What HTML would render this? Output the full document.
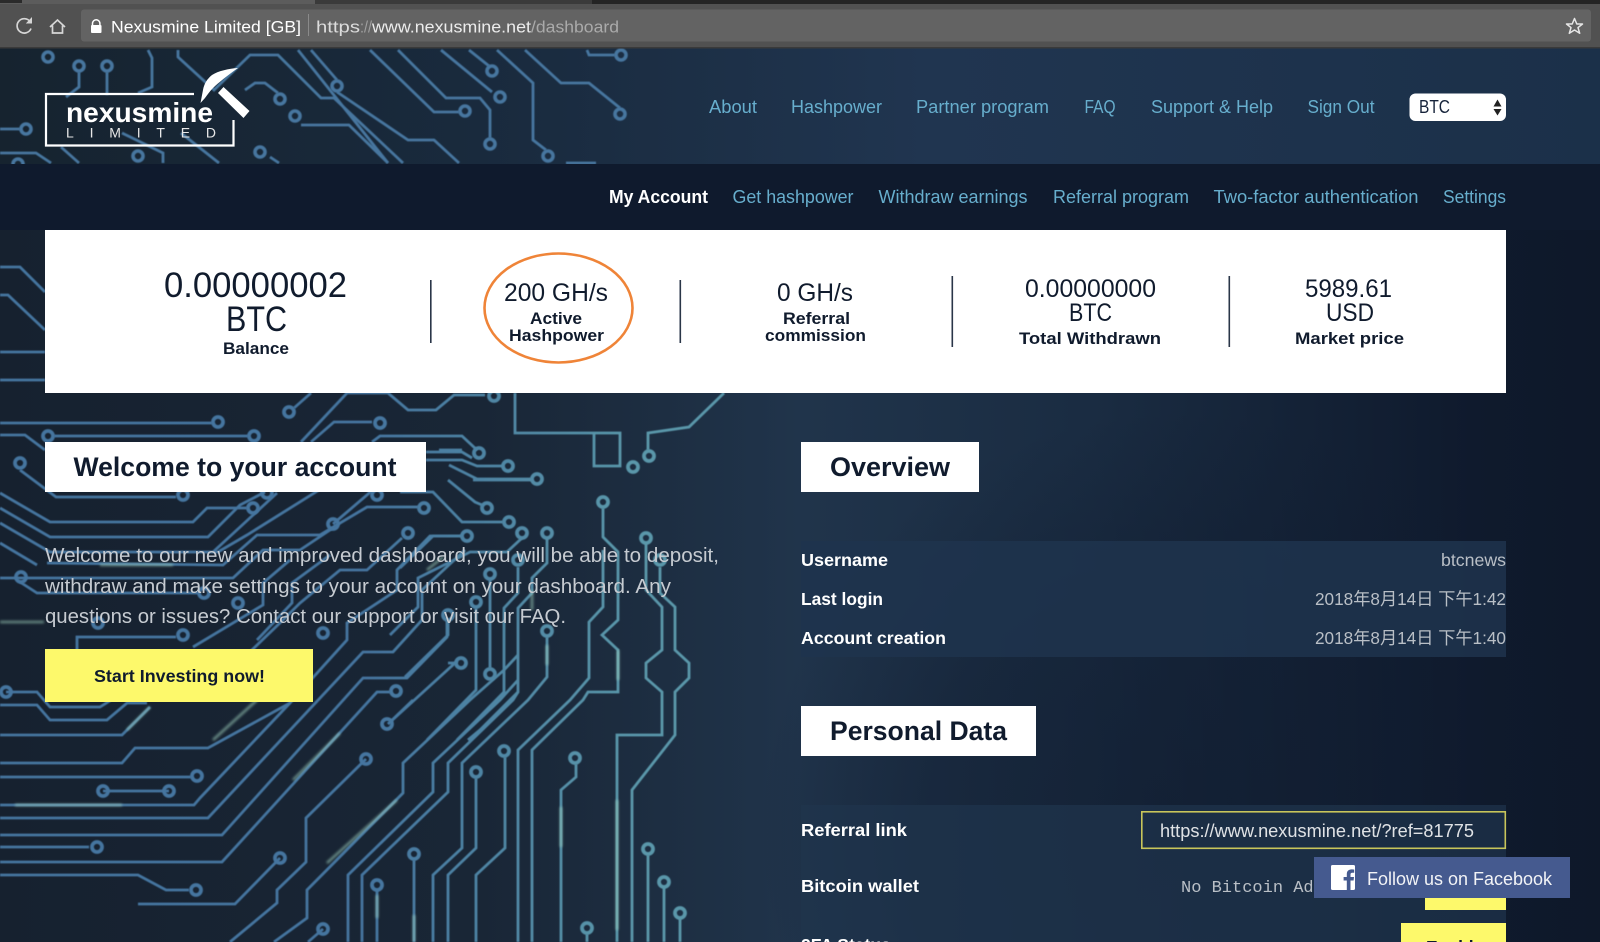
<!DOCTYPE html>
<html lang="en"><head><meta charset="utf-8"><title>Nexusmine Limited - Dashboard</title>
<style>
html,body{margin:0;padding:0;width:1600px;height:942px;overflow:hidden;background:#0f1a2d}
svg{display:block;font-family:"Liberation Sans","Noto Sans CJK SC",sans-serif}
.n{fill:#67aecd;font-size:18px}
.b{font-weight:700}
.d{fill:#101b2d}
.tr{fill:#fff;font-size:17.5px;font-weight:700}
.tv{fill:#b9bfc6;font-size:17.5px}
</style></head><body>
<svg width="1600" height="942" viewBox="0 0 1600 942" xmlns="http://www.w3.org/2000/svg">
<defs>
<linearGradient id="bg" x1="0" x2="1" y1="0" y2="0"><stop offset="0" stop-color="#16212f"/><stop offset=".3" stop-color="#192636"/><stop offset=".5" stop-color="#20344b"/><stop offset=".68" stop-color="#1a2c42"/><stop offset=".92" stop-color="#0f1a2d"/><stop offset="1" stop-color="#0e1829"/></linearGradient>
<radialGradient id="vd" gradientUnits="userSpaceOnUse" cx="1180" cy="830" r="420"><stop offset="0" stop-color="#0f1a2d" stop-opacity=".55"/><stop offset=".6" stop-color="#0f1a2d" stop-opacity=".35"/><stop offset="1" stop-color="#0f1a2d" stop-opacity="0"/></radialGradient>
<linearGradient id="hd" x1="0" x2="1" y1="0" y2="0"><stop offset="0" stop-color="#16232f"/><stop offset=".3" stop-color="#192a3d"/><stop offset=".58" stop-color="#203550"/><stop offset="1" stop-color="#1b3049"/></linearGradient>
<linearGradient id="tr" gradientUnits="userSpaceOnUse" x1="360" x2="620" y1="0" y2="0"><stop offset="0" stop-color="#44749f"/><stop offset="1" stop-color="#5a97aa"/></linearGradient>
<filter id="gl" x="-30%" y="-300%" width="160%" height="700%"><feGaussianBlur stdDeviation="1.3"/></filter>
<filter id="sm"><feGaussianBlur stdDeviation=".4"/></filter>
</defs>

<!-- page background -->
<rect width="1600" height="942" fill="url(#bg)"/>
<rect x="700" y="393" width="900" height="549" fill="url(#vd)"/>

<!-- circuit traces: page -->
<g fill="none" stroke="url(#tr)" stroke-width="2.8" filter="url(#sm)">
<path d="M0 267H20L45 292M0 295H8L45 330M0 352H45M0 380H45"/>
<path d="M0 423H212M54 436H248M0 435H25L45 450M311 393L294 408"/>
<path d="M301 442L347 393H388L408 410H436L454 395H485M311 442L334 422H372M372 442L380 436H462L477 450M439 450H462"/>
<path d="M515 393V433H594V466H620V433H594M648 450V433L689 427 724 393"/>
<path d="M426 452H462L472 458M426 460H462L477 466H503M449 465L477 479H531M473 480H532M448 480L475 502 482 505M400 492H433L462 522H503"/>
<path d="M20 470L56 497H176M0 493L50 522H193L207 508H247M0 508L50 537H208L240 505 265 492M0 523L50 552H218L247 535 335 480M47 563L223 565 257 535H320L367 507H418M0 543L37 565"/>
<path d="M333 524L367 495 383 480M277 493L213 552M20 582L37 593H198M0 578H233L263 550H300L333 528"/>
<path d="M193 647L263 605V583L290 560M257 640L292 603V583L330 555M200 700L283 620 300 603 340 570H367L402 538"/>
<path d="M77 650V637H176M402 538M462 536H430L397 570V590L347 623V640L290 703 208 748H135L122 763H0"/>
<path d="M0 798M0 805H194L200 798 290 703"/>
<path d="M0 818H208L363 652H393L422 620V590L465 550"/>
<path d="M0 835H222L363 678H407L447 637V620M0 862H222L377 692H390"/>
<path d="M0 735H122L150 707M38 692H6M0 705H37L50 720H107L127 703H147M37 692L50 707H100L127 690M0 777H191M103 791H169M0 847H89M0 875H138L166 890H189"/>
<path d="M366 759L306 818V862L277 890V903L230 942M280 858L235 904H138M388 724L455 663H448"/>
<path d="M274 942L307 918V890L403 793V763L470 700 504 670 518 655M348 942V875L433 792V763L500 700 518 680M362 942V875L448 792V763L513 700 518 692M433 942V875L462 848V763L528 700 547 677V637M448 942V875L476 848V778M476 942V875L505 848V757"/>
<path d="M518 942V750L570 700 589 678V622L603 607V550M532 942V750L583 700 588 692H618V650L602 635 618 620V552L603 537V508"/>
<path d="M561 942V790L576 777V764M617 942V735H662V692L646 678V663L662 650V607L646 590V543M632 942V790L675 735V692L689 678V663L675 650V607L660 593V567"/>
<path d="M547 538V563L532 578V593L518 608V692L480 730 468 740M518 567V593L504 608V692L457 740M476 608V690L427 740M490 580V668M522 538L507 552H470L418 578V607L390 635M462 536H433L400 568M448 620V635L405 677"/>
<path d="M414 860V942M377 890V942M648 855V942M664 887V942M680 918V942M587 934V942M323 929L308 942M388 724L413 700"/>
</g>
<g fill="none" stroke="url(#tr)" stroke-width="3.8" filter="url(#sm)">
<circle cx="218" cy="422" r="5"/><circle cx="48" cy="436" r="5"/><circle cx="254" cy="436" r="5"/><circle cx="289" cy="412" r="5"/><circle cx="380" cy="423" r="5"/><circle cx="494" cy="396" r="5"/><circle cx="479" cy="453" r="5"/><circle cx="508" cy="466" r="5"/><circle cx="537" cy="479" r="5"/><circle cx="633" cy="467" r="5"/><circle cx="649" cy="456" r="5"/><circle cx="20" cy="463" r="5"/><circle cx="183" cy="495" r="5"/><circle cx="253" cy="508" r="5"/><circle cx="267" cy="493" r="5"/><circle cx="377" cy="495" r="5"/><circle cx="333" cy="524" r="5"/><circle cx="424" cy="508" r="5"/><circle cx="408" cy="533" r="5"/><circle cx="467" cy="536" r="5"/><circle cx="487" cy="508" r="5"/><circle cx="509" cy="522" r="5"/><circle cx="522" cy="533" r="5"/><circle cx="547" cy="533" r="5"/><circle cx="603" cy="502" r="5"/><circle cx="646" cy="538" r="5"/><circle cx="660" cy="560" r="5"/><circle cx="518" cy="560" r="5"/><circle cx="21" cy="577" r="5"/><circle cx="204" cy="593" r="5"/><circle cx="238" cy="603" r="5"/><circle cx="490" cy="574" r="5"/><circle cx="476" cy="602" r="5"/><circle cx="448" cy="615" r="5"/><circle cx="323" cy="633" r="5"/><circle cx="183" cy="635" r="5"/><circle cx="547" cy="631" r="5"/><circle cx="98" cy="623" r="5"/><circle cx="461" cy="663" r="5"/><circle cx="490" cy="674" r="5"/><circle cx="396" cy="691" r="5"/><circle cx="387" cy="724" r="5"/><circle cx="6" cy="692" r="5"/><circle cx="366" cy="759" r="5"/><circle cx="504" cy="751" r="5"/><circle cx="575" cy="758" r="5"/><circle cx="476" cy="772" r="5"/><circle cx="197" cy="776" r="5"/><circle cx="103" cy="791" r="5"/><circle cx="169" cy="791" r="5"/><circle cx="97" cy="847" r="5"/><circle cx="280" cy="858" r="5"/><circle cx="414" cy="854" r="5"/><circle cx="648" cy="849" r="5"/><circle cx="664" cy="882" r="5"/><circle cx="377" cy="885" r="5"/><circle cx="196" cy="890" r="5"/><circle cx="680" cy="913" r="5"/><circle cx="587" cy="928" r="5"/><circle cx="323" cy="929" r="5"/>
</g>
<!-- glows -->
<g fill="none" stroke="#9fd0bd" stroke-width="2.6" filter="url(#gl)" opacity=".6">
<path d="M0 622H44M15 805H122M100 565H173"/>
<path d="M127 730L150 707M213 740L257 700M293 780L340 733M327 863L397 800M427 570L443 557"/>
<path d="M561 807V847M377 895V918M414 915V942M617 800V930M618 650V680M547 645V665M532 590V610"/>
</g>

<!-- header -->
<rect y="48" width="1600" height="116" fill="url(#hd)"/>
<g fill="none" stroke="#47769f" stroke-width="2.8" filter="url(#sm)">
<path d="M79 72V87L66 97M107 72V95M148 50L152 58V87L138 93M178 50V57L214 90L250 55H278L321 98H334L403 163"/>
<path d="M298 50L388 163M311 50L337 80M337 92L408 140H434L459 163M370 50L434 112H459M398 50L446 98H480L490 110V138M441 50L492 92M469 50L489 66M497 50L533 83V140L546 150"/>
<path d="M525 50L561 83H589L620 108M587 50L589 55H615M301 125H349L388 163M245 90L255 83H265L278 93M0 153H36L51 163M61 147L79 163M0 129H20M122 133L163 153V163M181 133L219 163M270 157L279 163M566 163H596"/>
</g>
<g fill="none" stroke="#47769f" stroke-width="3.6" filter="url(#sm)">
<circle cx="48" cy="57" r="5"/><circle cx="79" cy="66" r="5"/><circle cx="107" cy="66" r="5"/><circle cx="621" cy="55" r="5"/><circle cx="492" cy="71" r="5"/><circle cx="337" cy="86" r="5"/><circle cx="500" cy="97" r="5"/><circle cx="465" cy="111" r="5"/><circle cx="620" cy="114" r="5"/><circle cx="280" cy="99" r="5"/><circle cx="295" cy="116" r="5"/><circle cx="26" cy="129" r="5"/><circle cx="490" cy="144" r="5"/><circle cx="548" cy="156" r="5"/><circle cx="138" cy="156" r="5"/><circle cx="260" cy="152" r="5"/><circle cx="18" cy="164" r="5"/>
</g>

<!-- browser chrome -->
<rect width="1600" height="48" fill="#515151"/>
<rect width="1600" height="4" fill="#5c5c5c"/>
<rect width="22" height="3" fill="#2a2a2a"/>
<rect x="315" width="277" height="4" fill="#3a3a3a"/>
<rect x="592" width="1008" height="4" fill="#242424"/>
<rect y="47" width="1600" height="1.5" fill="#3a3a3a"/>
<rect x="81" y="9.5" width="1510" height="32" rx="3" fill="#636363"/>
<g fill="none" stroke="#d6d6d6" stroke-width="1.7">
<path d="M30 21.5A7.2 7.2 0 1 0 31 28.5"/>
<path d="M50 27L57.5 20 65 27M52.5 25.5V33H62.5V25.5"/>
</g>
<path d="M32 17V23.5H25.8Z" fill="#d6d6d6"/>
<path d="M92.5 25.5V23.5A3.7 3.7 0 0 1 99.9 23.5V25.5" fill="none" stroke="#fff" stroke-width="1.5"/>
<rect x="91" y="25" width="10.5" height="8" rx="1" fill="#fff"/>
<path d="M1574.5 18.5L1576.8 24H1582.5L1578 27.6 1579.7 33.3 1574.5 30 1569.3 33.3 1571 27.6 1566.5 24H1572.2Z" fill="none" stroke="#e6e6e6" stroke-width="1.5" stroke-linejoin="round"/>
<rect x="308" y="14" width="1" height="22" fill="#8a8a8a"/>
<text x="111" y="32.5" font-size="17" fill="#fff" textLength="190" lengthAdjust="spacingAndGlyphs">Nexusmine Limited [GB]</text>
<text x="316" y="32.5" font-size="17" fill="#dcdcdc" textLength="44" lengthAdjust="spacingAndGlyphs">https</text>
<text x="360" y="32.5" font-size="17" fill="#a0a0a0" textLength="12" lengthAdjust="spacingAndGlyphs">://</text>
<text x="372" y="32.5" font-size="17" fill="#ececec" textLength="159" lengthAdjust="spacingAndGlyphs">www.nexusmine.net</text>
<text x="531" y="32.5" font-size="17" fill="#aaaaaa" textLength="88" lengthAdjust="spacingAndGlyphs">/dashboard</text>

<!-- logo -->
<path d="M194 94H46V145.5H233.5V120" fill="none" stroke="#fff" stroke-width="2.2"/>
<text x="66" y="122" font-size="27.5" font-weight="700" fill="#fff" textLength="147" lengthAdjust="spacingAndGlyphs">nexusmine</text>
<text x="66" y="137.5" font-size="14" fill="#e8e8e8" textLength="150" lengthAdjust="spacing">LIMITED</text>
<path d="M238 68C229 68.5 218 71 212 75 207 79 204 84 203 90L200.5 103 205 98C208 94 210 91 213 88 218 83 228 75 238 68Z" fill="#fff"/>
<path d="M218 93L223.5 87 249.5 111 243.5 118Z" fill="#fff"/>

<!-- main nav -->
<text class="n" x="709" y="113" textLength="48" lengthAdjust="spacingAndGlyphs">About</text>
<text class="n" x="791" y="113" textLength="91" lengthAdjust="spacingAndGlyphs">Hashpower</text>
<text class="n" x="916" y="113" textLength="133" lengthAdjust="spacingAndGlyphs">Partner program</text>
<text class="n" x="1084.5" y="113" textLength="31" lengthAdjust="spacingAndGlyphs">FAQ</text>
<text class="n" x="1151" y="113" textLength="122" lengthAdjust="spacingAndGlyphs">Support &amp; Help</text>
<text class="n" x="1307.5" y="113" textLength="67" lengthAdjust="spacingAndGlyphs">Sign Out</text>
<rect x="1409.5" y="93.5" width="96.5" height="27.5" rx="6" fill="#fff"/>
<text x="1419" y="113" font-size="18" fill="#16233a" textLength="31" lengthAdjust="spacingAndGlyphs">BTC</text>
<path d="M1493.5 106.5L1497.5 99.5 1501.5 106.5ZM1493.5 109H1501.5L1497.5 115.5Z" fill="#222"/>

<!-- sub nav -->
<rect y="164" width="1600" height="66" fill="#0f1a2d"/>
<text x="609" y="203" font-size="18" font-weight="700" fill="#fff" textLength="99" lengthAdjust="spacingAndGlyphs">My Account</text>
<text class="n" x="732.5" y="203" textLength="121" lengthAdjust="spacingAndGlyphs">Get hashpower</text>
<text class="n" x="878.5" y="203" textLength="149" lengthAdjust="spacingAndGlyphs">Withdraw earnings</text>
<text class="n" x="1053" y="203" textLength="136" lengthAdjust="spacingAndGlyphs">Referral program</text>
<text class="n" x="1213.5" y="203" textLength="205" lengthAdjust="spacingAndGlyphs">Two-factor authentication</text>
<text class="n" x="1443" y="203" textLength="63" lengthAdjust="spacingAndGlyphs">Settings</text>

<!-- stats panel -->
<rect x="45" y="230" width="1461" height="163" fill="#fff"/>
<g fill="#2a3648">
<rect x="430" y="280" width="1.6" height="63"/><rect x="679.5" y="280" width="1.6" height="63"/>
<rect x="951.5" y="276" width="1.6" height="71"/><rect x="1228.5" y="276" width="1.6" height="71"/>
</g>
<ellipse cx="558.5" cy="308" rx="74" ry="54.5" fill="none" stroke="#ef8438" stroke-width="2.6"/>
<g class="d">
<text x="164" y="297" font-size="35" textLength="183" lengthAdjust="spacingAndGlyphs">0.00000002</text>
<text x="226" y="331" font-size="35" textLength="61" lengthAdjust="spacingAndGlyphs">BTC</text>
<text class="b" x="223" y="354" font-size="17" textLength="66" lengthAdjust="spacingAndGlyphs">Balance</text>
<text x="504" y="301" font-size="25" textLength="104" lengthAdjust="spacingAndGlyphs">200 GH/s</text>
<text class="b" x="530" y="324" font-size="17" textLength="52" lengthAdjust="spacingAndGlyphs">Active</text>
<text class="b" x="509" y="341" font-size="17" textLength="95" lengthAdjust="spacingAndGlyphs">Hashpower</text>
<text x="777" y="301" font-size="25" textLength="76" lengthAdjust="spacingAndGlyphs">0 GH/s</text>
<text class="b" x="783" y="324" font-size="17" textLength="67" lengthAdjust="spacingAndGlyphs">Referral</text>
<text class="b" x="765" y="341" font-size="17" textLength="101" lengthAdjust="spacingAndGlyphs">commission</text>
<text x="1025" y="297" font-size="25" textLength="131" lengthAdjust="spacingAndGlyphs">0.00000000</text>
<text x="1069" y="321" font-size="25" textLength="43" lengthAdjust="spacingAndGlyphs">BTC</text>
<text class="b" x="1019" y="344" font-size="17" textLength="142" lengthAdjust="spacingAndGlyphs">Total Withdrawn</text>
<text x="1305" y="297" font-size="25" textLength="87" lengthAdjust="spacingAndGlyphs">5989.61</text>
<text x="1326" y="321" font-size="25" textLength="48" lengthAdjust="spacingAndGlyphs">USD</text>
<text class="b" x="1295" y="344" font-size="17" textLength="109" lengthAdjust="spacingAndGlyphs">Market price</text>

<!-- headings -->
<rect x="45" y="442" width="381" height="50" fill="#fff"/>
<text class="b" x="73.5" y="476" font-size="27" textLength="323" lengthAdjust="spacingAndGlyphs">Welcome to your account</text>
<rect x="801" y="442" width="178" height="50" fill="#fff"/>
<text class="b" x="830" y="476" font-size="27" textLength="120" lengthAdjust="spacingAndGlyphs">Overview</text>
<rect x="801" y="706" width="235" height="50" fill="#fff"/>
<text class="b" x="830" y="740" font-size="27" textLength="177" lengthAdjust="spacingAndGlyphs">Personal Data</text>
</g>

<!-- welcome copy -->
<g fill="#c6cbd1" font-size="20">
<text x="45" y="562" textLength="674" lengthAdjust="spacingAndGlyphs">Welcome to our new and improved dashboard, you will be able to deposit,</text>
<text x="45" y="593" textLength="626" lengthAdjust="spacingAndGlyphs">withdraw and make settings to your account on your dashboard. Any</text>
<text x="45" y="623" textLength="521" lengthAdjust="spacingAndGlyphs">questions or issues? Contact our support or visit our FAQ.</text>
</g>
<rect x="45" y="649" width="268" height="53" fill="#fdf96b"/>
<text x="94" y="682" font-size="17.5" font-weight="700" fill="#101b2d" textLength="171" lengthAdjust="spacingAndGlyphs">Start Investing now!</text>

<!-- overview table -->
<rect x="801" y="541" width="705" height="116" fill="#1f344d" opacity=".85"/>
<text class="tr" x="801" y="566" textLength="87" lengthAdjust="spacingAndGlyphs">Username</text>
<text class="tv" x="1441" y="566" textLength="65" lengthAdjust="spacingAndGlyphs">btcnews</text>
<text class="tr" x="801" y="605" textLength="82" lengthAdjust="spacingAndGlyphs">Last login</text>
<text class="tv" x="1315" y="605" textLength="191" lengthAdjust="spacingAndGlyphs">2018年8月14日 下午1:42</text>
<text class="tr" x="801" y="644" textLength="145" lengthAdjust="spacingAndGlyphs">Account creation</text>
<text class="tv" x="1315" y="644" textLength="191" lengthAdjust="spacingAndGlyphs">2018年8月14日 下午1:40</text>

<!-- personal data table -->
<rect x="801" y="805" width="705" height="137" fill="#1f344d" opacity=".7"/>
<text class="tr" x="801" y="836" textLength="106" lengthAdjust="spacingAndGlyphs">Referral link</text>
<rect x="1141.8" y="811.8" width="363.5" height="36.5" fill="none" stroke="#c8c55a" stroke-width="1.6"/>
<text x="1160" y="837" font-size="18" fill="#dfe2e5" textLength="314" lengthAdjust="spacingAndGlyphs">https://www.nexusmine.net/?ref=81775</text>
<text class="tr" x="801" y="892" textLength="118" lengthAdjust="spacingAndGlyphs">Bitcoin wallet</text>
<text x="1181" y="892" font-size="17" fill="#b9bfc6" style="font-family:'Liberation Mono',monospace">No Bitcoin Address</text>
<rect x="1425" y="880" width="81" height="30" fill="#fdf96b"/>
<rect x="1401" y="923" width="105" height="19" fill="#fdf96b"/>
<text x="1426" y="953" font-size="17.5" font-weight="700" fill="#101b2d">Enable</text>
<text class="tr" x="801" y="951">2FA Status</text>

<!-- facebook widget -->
<rect x="1314" y="857" width="256" height="41" fill="#455a8f"/>
<rect x="1331" y="865" width="24" height="25" rx="1.5" fill="#fff"/>
<path d="M1350.5 890V880.5H1353.6L1354 877H1350.5V874.6C1350.5 873.4 1351 872.8 1352.3 872.8H1354.2V869.6C1353.6 869.5 1352.6 869.4 1351.6 869.4 1348.6 869.4 1346.8 871.1 1346.8 874.2V877H1343.6V880.5H1346.8V890Z" fill="#455a8f"/>
<text x="1367" y="885" font-size="18" fill="#f2f3f6" textLength="185" lengthAdjust="spacingAndGlyphs">Follow us on Facebook</text>
</svg>
</body></html>
